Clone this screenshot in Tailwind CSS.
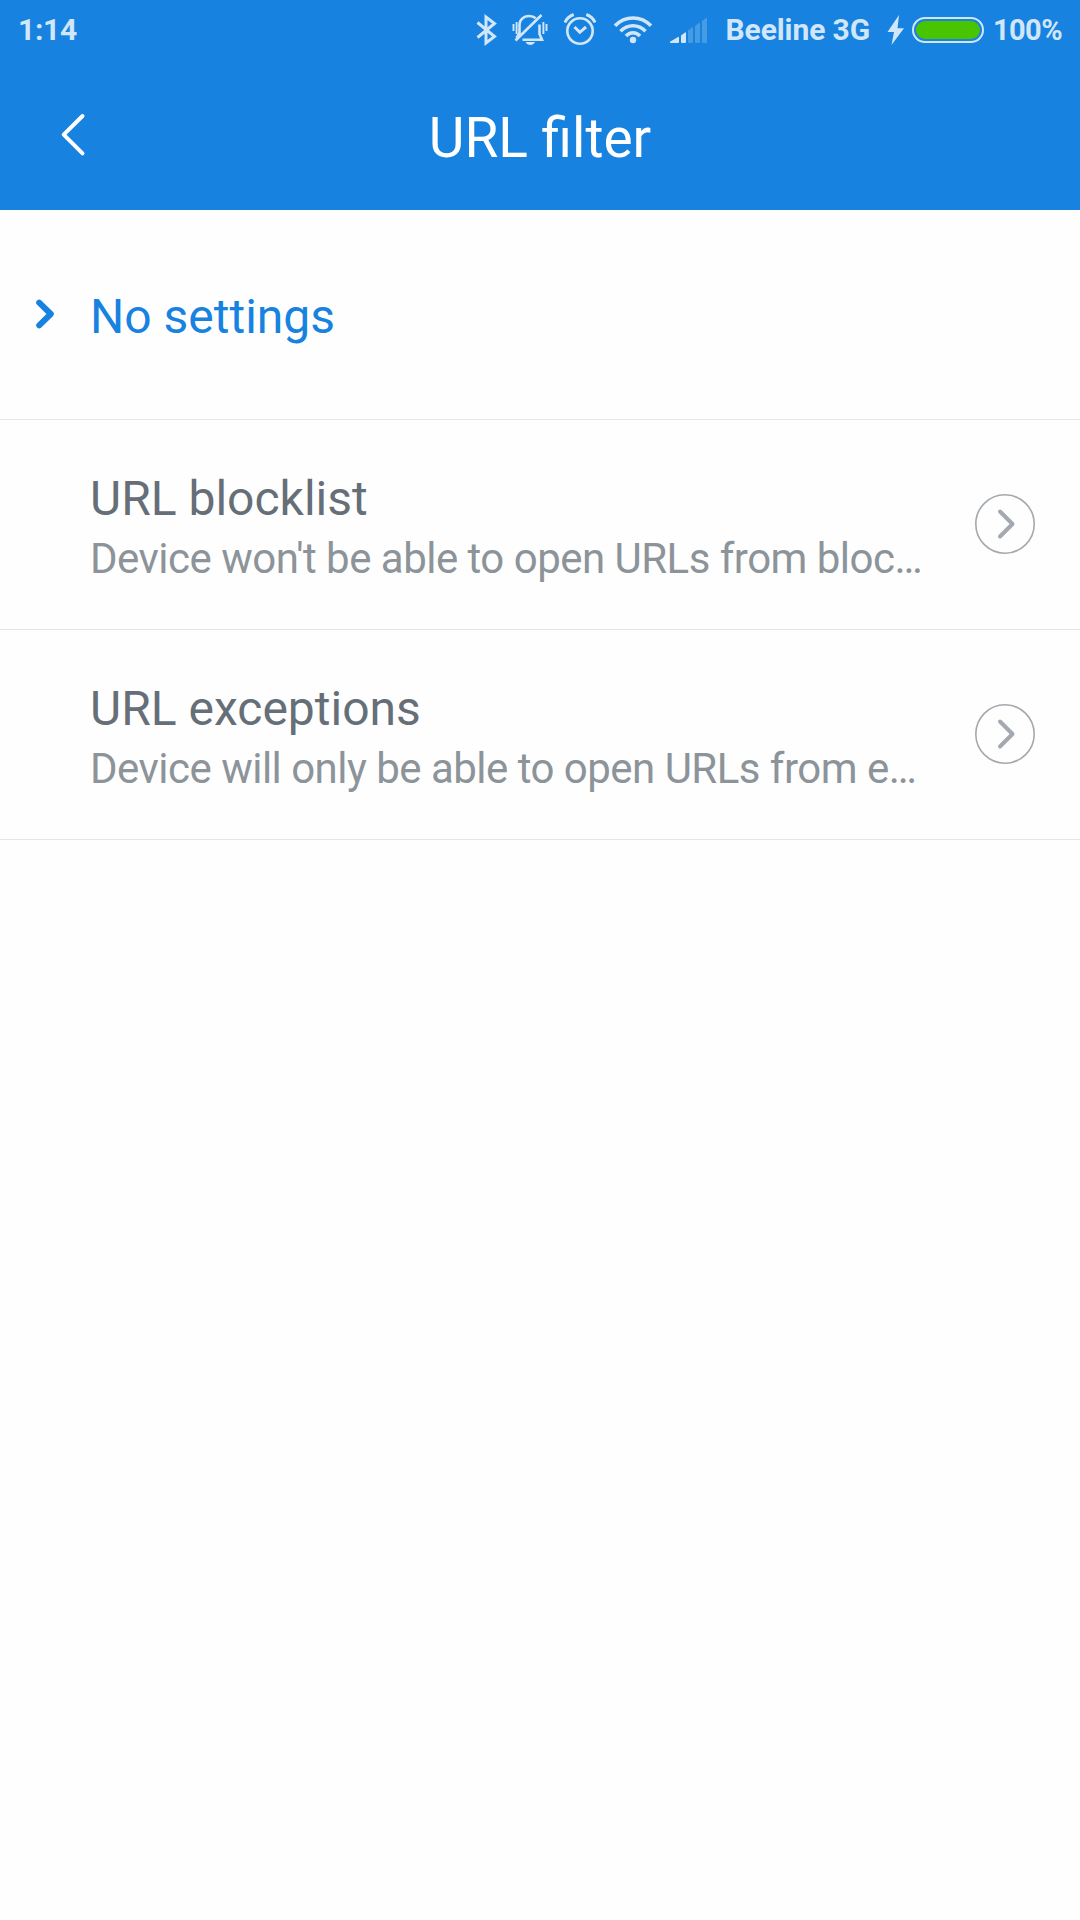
<!DOCTYPE html>
<html lang="en">
  <head>
    <meta charset="UTF-8" />
    <meta name="viewport" content="width=device-width, initial-scale=1.0" />
    <title>URL filter</title>
    <script src="https://cdn.jsdelivr.net/npm/@tailwindcss/browser@4"></script>
  </head>
<body class="bg-[#fefefe] font-['Roboto',sans-serif]">
  <header class="bg-[#1782df] text-white h-[210px]">

    <!-- status bar -->
    <div class="flex items-center h-[60px] pl-[18px] pr-[18px] text-[30px] leading-[60px] font-bold text-[#d1e6f9]">
      <span class="mr-auto tracking-[-0.3px]">1:14</span>

      <svg class="w-[22px] h-[60px] mr-[14px] shrink-0" viewBox="0 0 22 60" fill="none" stroke="currentColor" stroke-width="3">
        <path d="M1.500 22.500l17 14-8.500 6.500V17l8.500 6.500-17 14" />
      </svg>
      <svg class="w-[36px] h-[60px] mr-[15px] shrink-0" viewBox="0 0 36 60" fill="none" stroke="currentColor" stroke-width="2.600">
        <path d="M7.500 34V25c0-5 4-9 9.500-9 2.500 0 5 .7 6.700 2.300M27.500 24.500V34l2.500 5.700H10.500" />
        <path d="M3.500 40.500L29.500 15" stroke-width="2.600" />
        <path d="M7.500 33L4.500 38" />
        <path d="M1.500 24v7M4.600 22v12M31.400 22v12M34.500 24v7" stroke-width="1.900" />
        <path d="M13.500 42h9.500c-1 2-2.800 3-4.700 3s-3.800-1-4.800-3z" fill="currentColor" stroke="none" />
      </svg>
      <svg class="w-[34px] h-[60px] mr-[16px] shrink-0" viewBox="0 0 34 60" fill="none" stroke="currentColor" stroke-width="2.600">
        <circle cx="17" cy="31" r="12.700" />
        <path d="M11.500 27l5.300 5.300 6.200-5.300" stroke-width="3" />
        <path d="M2 22.500c1.500-3.600 4.500-6.500 8.700-8M32 22.500c-1.500-3.600-4.500-6.500-8.700-8" stroke-width="3" />
      </svg>
      <svg class="w-[40px] h-[60px] mr-[17px] shrink-0" viewBox="0 0 40 60" fill="none" stroke="currentColor" stroke-width="3.600">
        <path d="M2 25.800c10-10.500 26-10.500 36 0" />
        <path d="M7.500 31.200c7-7.300 18-7.300 25 0" />
        <path d="M13 36c4-4.300 10-4.300 14 0" />
        <circle cx="20" cy="40" r="3.200" fill="currentColor" stroke="none" />
      </svg>
      <svg class="w-[38px] h-[60px] mr-[17px] shrink-0" viewBox="0 0 38 60" fill="currentColor">
        <path d="M0 43v-1.300l8-4.700q1-.5 1 .7V42q0 1-1 1z" />
        <path d="M11 35.500l4-3q1-.6 1 .6V42q0 1-1 1h-3q-1 0-1-1z" />
        <g class="opacity-25">
          <path d="M18 30.500l4-3q1-.6 1 .6V42q0 1-1 1h-3q-1 0-1-1z" />
          <path d="M25 26l4-3q1-.6 1 .6V42q0 1-1 1h-3q-1 0-1-1z" />
          <path d="M32 21l4-3q1-.6 1 .6V42q0 1-1 1h-3q-1 0-1-1z" />
        </g>
      </svg>

      <span class="tracking-[-0.1px]">Beeline 3G</span>

      <svg class="w-[18px] h-[60px] ml-[17px] mr-[7px] shrink-0" viewBox="0 0 18 60" fill="currentColor">
        <path d="M12 15L0.500 32H7L4.500 45 17 28.200H10.500z" />
      </svg>
      <svg class="w-[72px] h-[60px] mr-[9px] shrink-0" viewBox="0 0 72 60">
        <rect x="1" y="18" width="70" height="24" rx="12" fill="none" stroke="currentColor" stroke-width="2" />
        <rect x="4" y="21" width="64" height="18" rx="9" fill="#48c400" />
      </svg>
      <span class="text-[29px] tracking-[-0.6px]">100%</span>
    </div>

    <!-- title bar -->
    <div class="grid grid-cols-3 items-center h-[150px] pb-[1px]">
      <svg class="w-[30px] h-[50px] ml-[60px] mb-[2px]" viewBox="0 0 30 50" fill="none" stroke="currentColor" stroke-width="4" stroke-linecap="round" stroke-linejoin="round">
        <path d="M22.500 7L3.700 25.700l18.800 18.700" />
      </svg>
      <h1 class="text-center text-[55px] leading-[64px] mt-[7px]">URL filter</h1>
    </div>
  </header>

  <main>
    <div class="flex items-center h-[210px] border-b border-[#e3e5e7] text-[#1782df]">
      <svg class="w-[20px] h-[32px] ml-[35px] mr-[35px] mb-px" viewBox="0 0 20 32" fill="none" stroke="currentColor" stroke-width="6" stroke-linecap="round" stroke-linejoin="round">
        <path d="M4.200 4.700L15.800 16 4.200 27.300" />
      </svg>
      <h2 class="text-[48px] leading-[60px] pt-[4px]">No settings</h2>
    </div>

    <a href="#" class="flex items-center justify-between h-[210px] border-b border-[#e3e5e7] pl-[90px] pr-[45px]">
      <div class="w-[840px] pt-[9px]">
        <h2 class="text-[48px] leading-[60px] text-[#666e77]">URL blocklist</h2>
        <p class="whitespace-nowrap text-[42px] leading-[60px] tracking-[-0.52px] text-[#8c949a]">Device won't be able to open URLs from bloc…</p>
      </div>
      <svg class="w-[60px] h-[60px] mb-px" viewBox="0 0 60 60" fill="none" stroke="#a3a9ae" stroke-linecap="round" stroke-linejoin="round">
        <circle cx="30" cy="30" r="29.200" stroke-width="1.600" />
        <path d="M25 17.500L37.500 30 25 42.500" stroke-width="4" />
      </svg>
    </a>

    <a href="#" class="flex items-center justify-between h-[210px] border-b border-[#e3e5e7] pl-[90px] pr-[45px]">
      <div class="w-[840px] pt-[9px]">
        <h2 class="text-[48px] leading-[60px] text-[#666e77]">URL exceptions</h2>
        <p class="whitespace-nowrap text-[42px] leading-[60px] tracking-[-0.52px] text-[#8c949a]">Device will only be able to open URLs from e…</p>
      </div>
      <svg class="w-[60px] h-[60px] mb-px" viewBox="0 0 60 60" fill="none" stroke="#a3a9ae" stroke-linecap="round" stroke-linejoin="round">
        <circle cx="30" cy="30" r="29.200" stroke-width="1.600" />
        <path d="M25 17.500L37.500 30 25 42.500" stroke-width="4" />
      </svg>
    </a>
  </main>
</body>
</html>
